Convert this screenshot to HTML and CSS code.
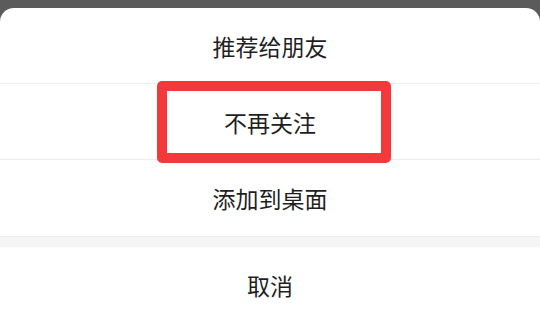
FILE: index.html
```html
<!DOCTYPE html>
<html lang="zh-CN">
<head>
    <meta charset="UTF-8">
    <meta name="viewport" content="width=device-width, initial-scale=1.0">
    <title>操作菜单</title>
    <link rel="stylesheet" href="styles.css">
</head>
<body>
    <div class="sheet">
        <ul class="action-list">
            <li class="action-item">推荐给朋友</li>
            <li class="action-item highlighted">不再关注</li>
            <li class="action-item">添加到桌面</li>
        </ul>
        <div class="sheet-gap"></div>
        <div class="action-item cancel">取消</div>
    </div>
</body>
</html>
```

FILE: styles.css
```css
body {
    margin: 0;
    background-color: #5b5b5b;
    font-family: "Noto Sans CJK SC", "Noto Sans", sans-serif;
    overflow: hidden;
}

.sheet {
    margin-top: 8px;
    background: white;
    border-radius: 14px 14px 0 0;
    height: 315px;
}

.action-list {
    list-style: none;
    margin: 0;
    padding: 0;
}

.action-item {
    height: 76px;
    display: flex;
    align-items: center;
    justify-content: center;
    font-size: 23px;
    color: #1f1f1f;
    border-bottom: 1px solid #ededed;
    box-sizing: border-box;
    position: relative;
}

.action-item:last-child {
    border-bottom: none;
}

/* cadre rouge d'annotation */
.highlighted::after {
    content: "";
    position: absolute;
    left: 157px;
    top: -3px;
    width: 234px;
    height: 82px;
    border: 10px solid #f5393a;
    border-radius: 5px;
    box-sizing: border-box;
}

.sheet-gap {
    height: 10px;
    background-color: #f5f5f5;
    border-top: 1px solid #ececec;
}

.cancel {
    border-bottom: none;
}
```
